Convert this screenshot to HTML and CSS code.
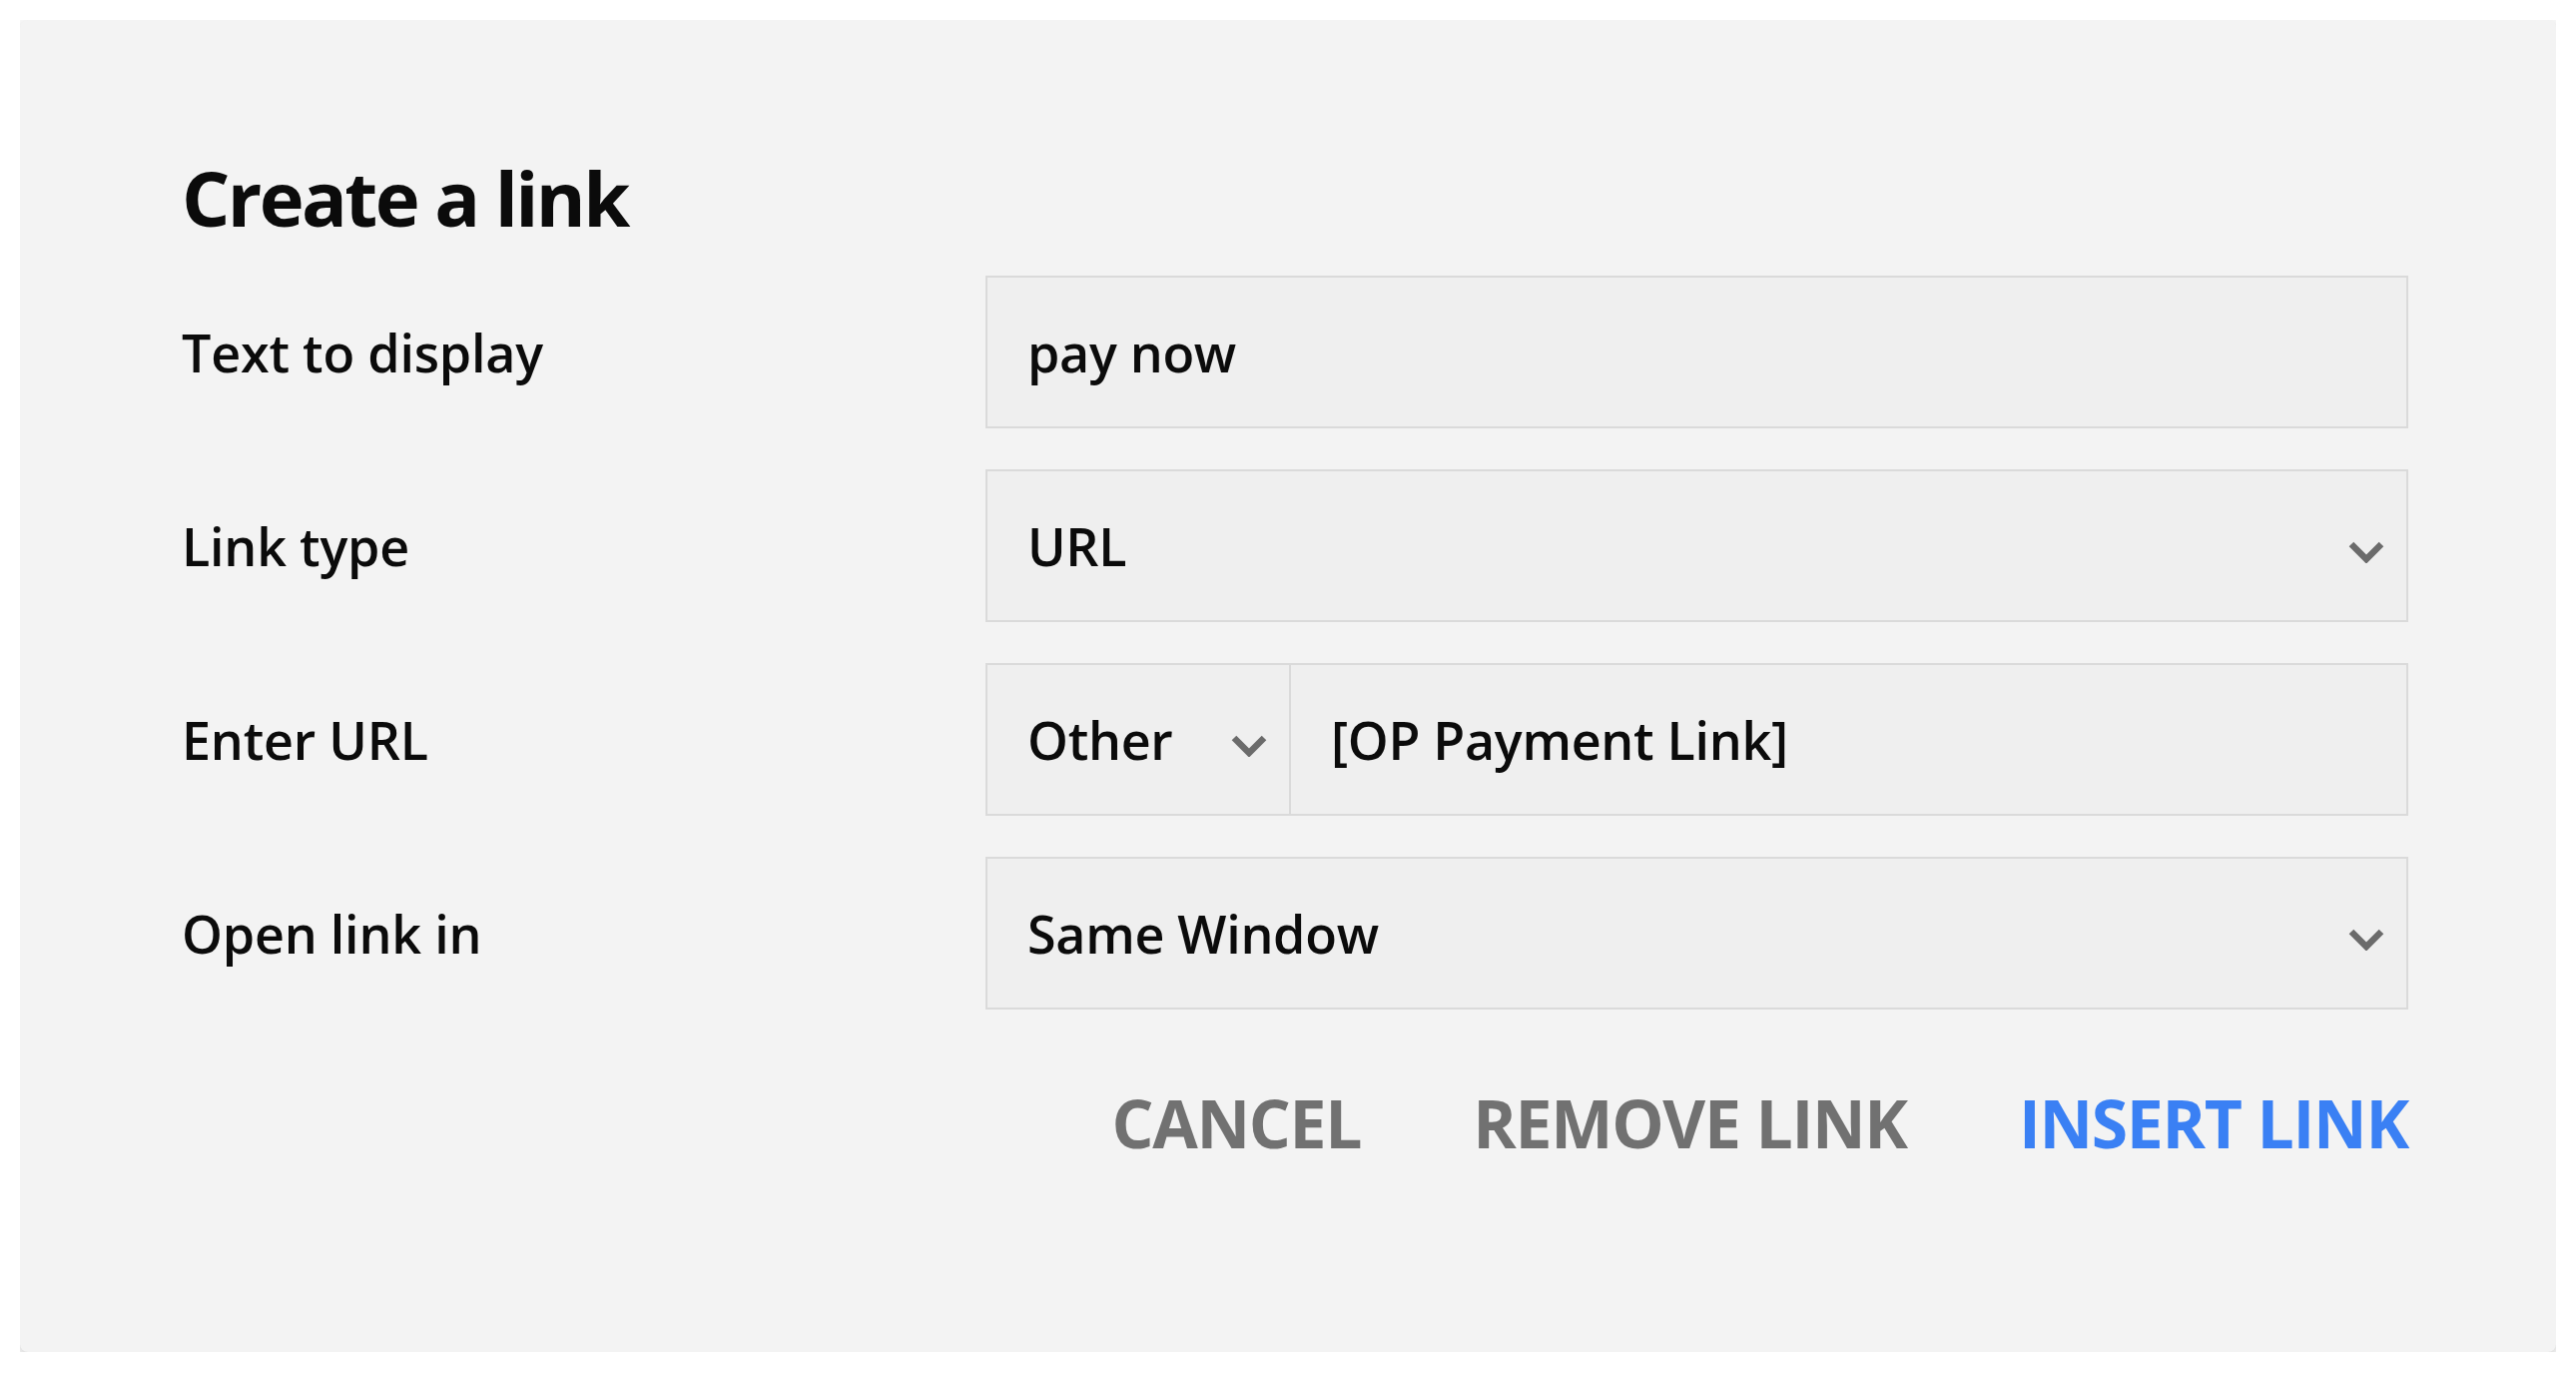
FILE: index.html
```html
<!DOCTYPE html>
<html lang="en">
  <head>
    <meta charset="utf-8">
    <title>Create a link</title>
    <link rel="stylesheet" href="styles.css">
  </head>
  <body>
    <div class="dialog">
      <h1 class="title">Create a link</h1>
      <form class="fields" name="link">
        <label class="label">Text to display</label>
        <div class="field">
          <input class="text" type="text" name="display" value="pay now">
        </div>

        <label class="label">Link type</label>
        <div class="field select">
          <span class="value">URL</span>
          <svg class="chevron" viewBox="0 0 36 22"><polyline points="3,3 18,18 33,3"/></svg>
        </div>

        <label class="label">Enter URL</label>
        <div class="field split">
          <div class="select protocol">
            <span class="value">Other</span>
            <svg class="chevron" viewBox="0 0 36 22"><polyline points="3,3 18,18 33,3"/></svg>
          </div>
          <input class="text" type="text" name="url" value="[OP Payment Link]">
        </div>

        <label class="label">Open link in</label>
        <div class="field select">
          <span class="value">Same Window</span>
          <svg class="chevron" viewBox="0 0 36 22"><polyline points="3,3 18,18 33,3"/></svg>
        </div>
      </form>
      <div class="actions">
        <button class="btn" type="button">CANCEL</button>
        <button class="btn" type="button">REMOVE LINK</button>
        <button class="btn primary" type="button">INSERT LINK</button>
      </div>
    </div>
  </body>
</html>
```

FILE: styles.css
```css
body{
  margin: 20px;
  background-color: #ffffff;
  font-family: "Open Sans", "Noto Sans", sans-serif;
  color: #0b0b0b;
}
.dialog{
  height: 1334px;
  box-sizing: border-box;
  padding: 132px 148px 0 162px;
  background-color: #f3f3f3;
  border-radius: 8px;
  box-shadow: 0 4px 16px rgba(0, 0, 0, 0.24);
}
.title{
  margin: 0 0 32px 0;
  font-size: 76px;
  line-height: 92px;
  font-weight: 700;
  letter-spacing: -2.6px;
}
.fields{
  display: grid;
  grid-template-columns: 805px 1fr;
  row-gap: 41px;
  align-items: center;
}
.label{
  font-size: 52px;
  font-weight: 600;
  letter-spacing: -0.2px;
}
.field{
  display: flex;
  align-items: center;
  height: 153px;
  box-sizing: border-box;
  border: 2px solid #dadada;
  background-color: #efefef;
}
.text{
  flex: 1;
  min-width: 0;
  height: 100%;
  box-sizing: border-box;
  padding: 0 40px;
  border: none;
  outline: none;
  background: transparent;
  font: inherit;
  font-size: 52px;
  font-weight: 600;
  letter-spacing: -0.3px;
  color: #0b0b0b;
}
.select{
  padding: 0 22px 0 40px;
  font-size: 52px;
  font-weight: 600;
  letter-spacing: -0.3px;
}
.value{
  flex: 1;
}
.chevron{
  width: 36px;
  height: 22px;
  margin-top: 12px;
  fill: none;
  stroke: #6b6b6b;
  stroke-width: 6.5;
}
.split{
  padding: 0;
}
.protocol{
  display: flex;
  align-items: center;
  width: 304px;
  height: 100%;
  box-sizing: border-box;
  border-right: 2px solid #dadada;
}
.actions{
  display: flex;
  justify-content: flex-end;
  gap: 112px;
  margin-top: 73px;
}
.btn{
  padding: 0;
  border: none;
  background: none;
  font-family: inherit;
  font-size: 66px;
  line-height: 80px;
  font-weight: 700;
  letter-spacing: -1.3px;
  color: #717171;
  cursor: pointer;
}
.primary{
  color: #3a80f4;
}
```
